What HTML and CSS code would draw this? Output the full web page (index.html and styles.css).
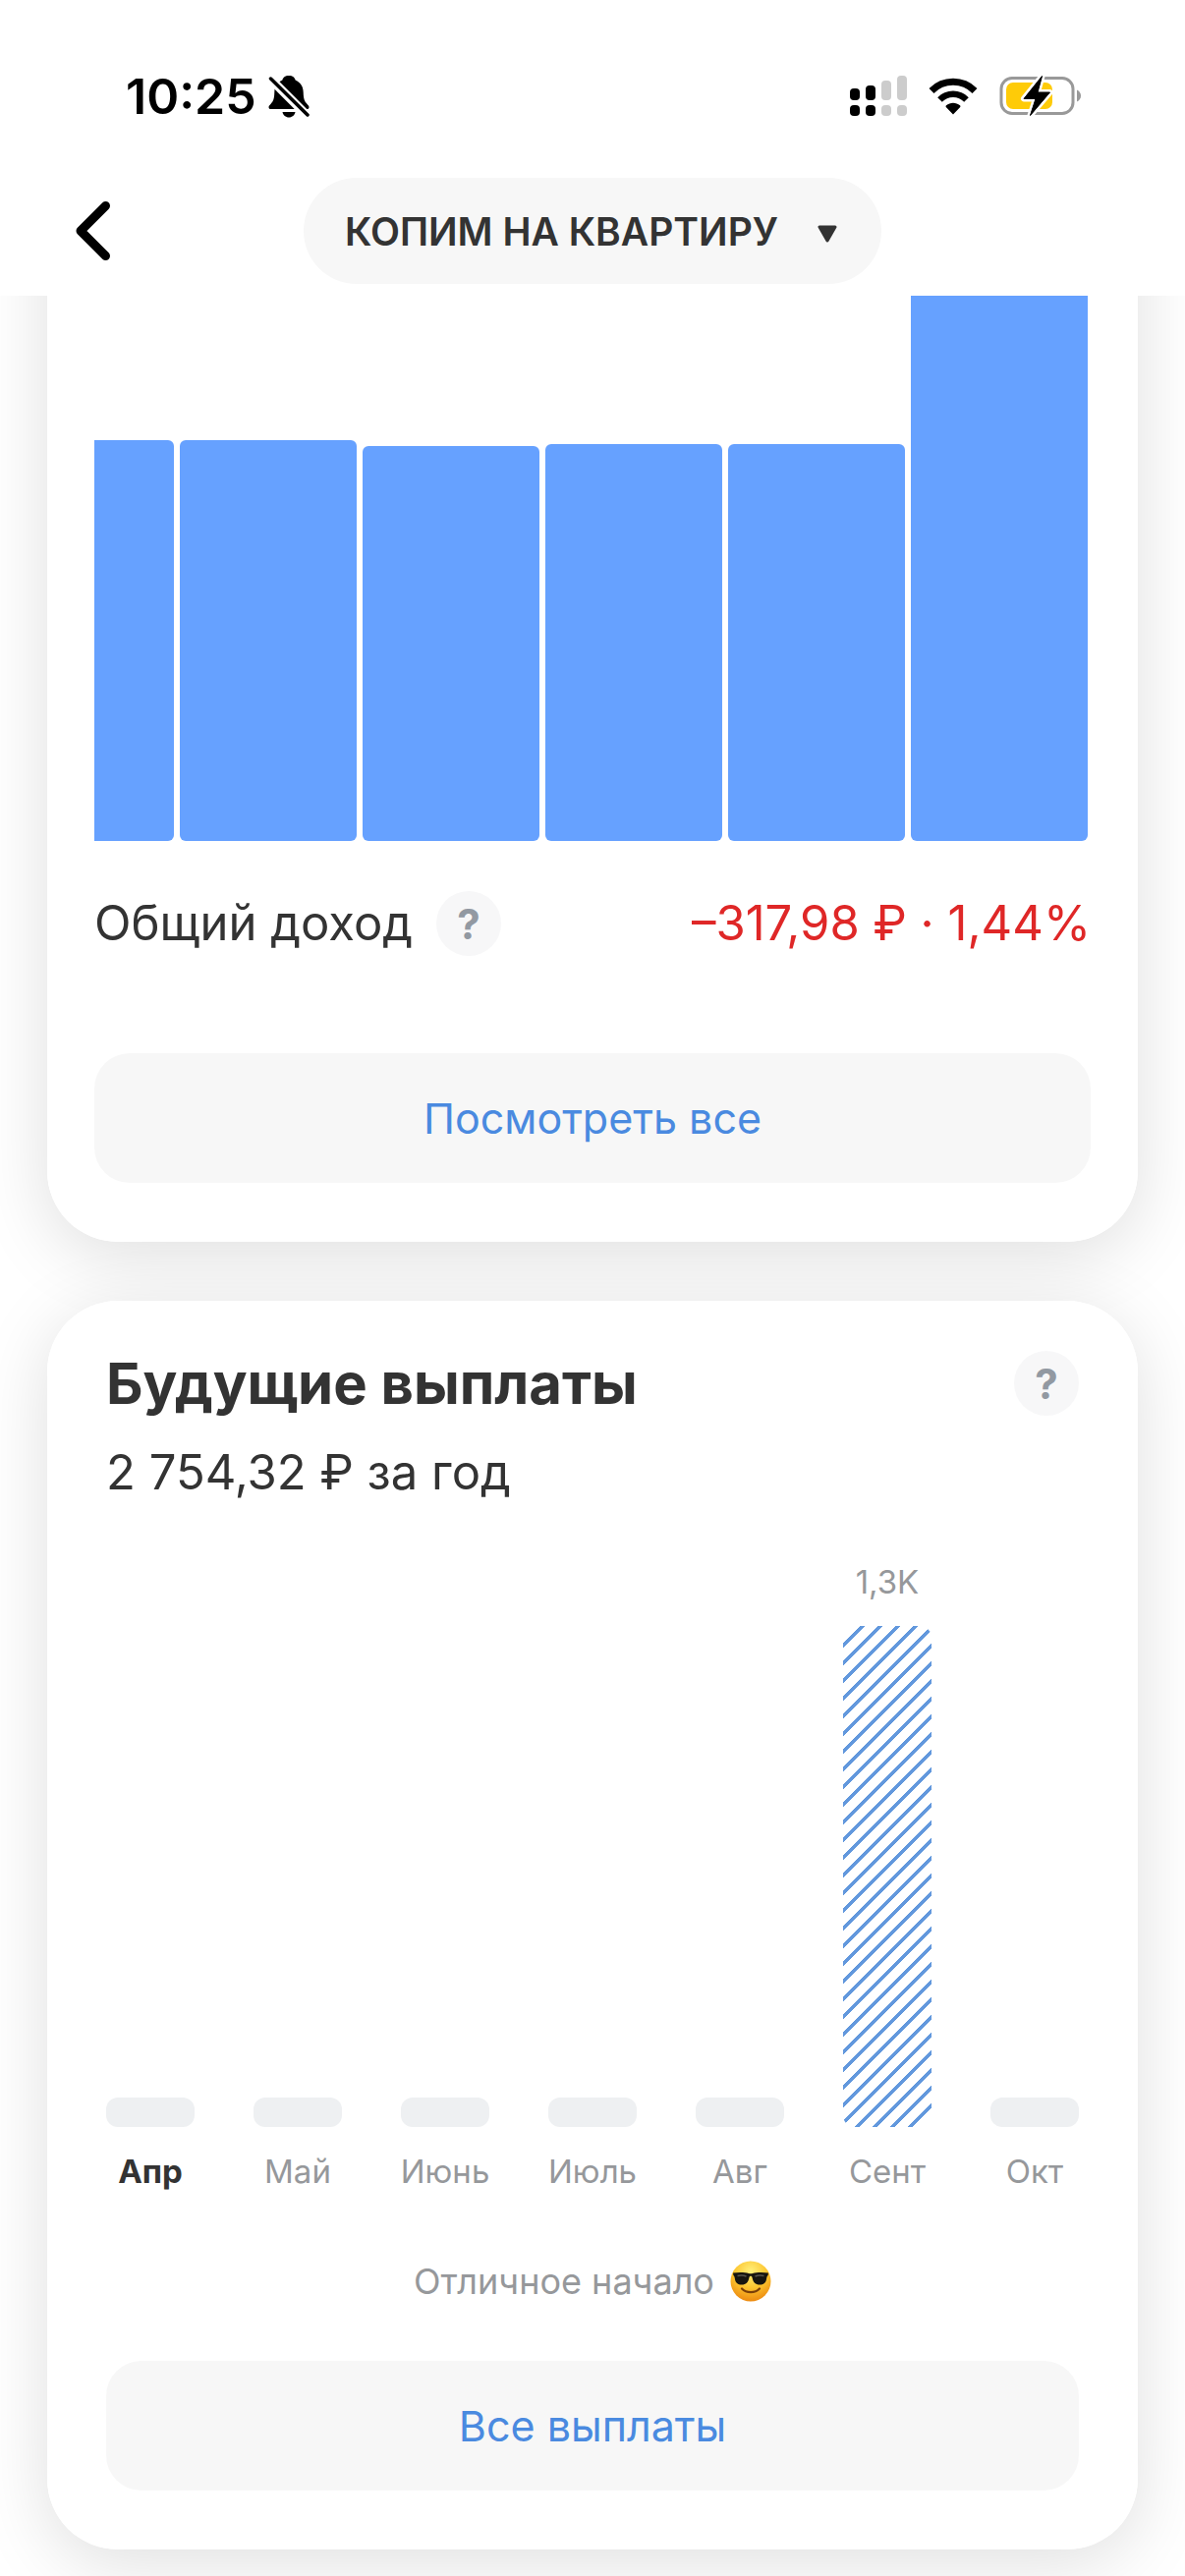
FILE: index.html
```html
<!DOCTYPE html>
<html lang="ru">
<head>
  <meta charset="UTF-8" />
  <title>Копим на квартиру</title>
  <meta name="viewport" content="width=device-width, initial-scale=1.0">
  <link rel="stylesheet" href="styles.css">
</head>
<body>
  <header>
    <div class="status-bar">
      <div class="status-left">
        <span class="time">10:25</span>
        <svg width="42" height="44" viewBox="0 0 42 44">
          <path d="M21 1c-4 0-6 2-6.600 4.500C9 8 6.500 12 6.300 18c-.2 7-1.300 9-3.500 11.500C1.200 31.300.5 32 .5 33.200.5 34.500 1.500 35 3 35h36c1.500 0 2.500-.5 2.500-1.800 0-1.200-.7-1.900-2.300-3.700-2.200-2.500-3.300-4.500-3.500-11.500-.2-6-2.700-10-8.100-12.500C27 3 25 1 21 1z"/>
          <path d="M14.500 38h13c-.6 3.200-3.200 5.500-6.500 5.500s-5.900-2.300-6.500-5.500z"/>
          <path d="M0 2l42 42" stroke="#fff" stroke-width="9"/>
          <path d="M2.500 4l37.500 37" stroke="#000" stroke-width="3.500" stroke-linecap="round"/>
        </svg>
      </div>
      <div class="status-right">
        <svg width="58" height="42" viewBox="0 0 58 42">
          <g>
            <rect x="0" y="13" width="10" height="12" rx="4"/>
            <rect x="16" y="10" width="10" height="15" rx="4"/>
            <rect x="0" y="30" width="10" height="11" rx="4"/>
            <rect x="16" y="30" width="10" height="11" rx="4"/>
          </g>
          <g fill="#ccc">
            <rect x="32" y="5" width="10" height="20" rx="4"/>
            <rect x="48" y="0" width="10" height="25" rx="4"/>
            <rect x="32" y="30" width="10" height="11" rx="4"/>
            <rect x="48" y="30" width="10" height="11" rx="4"/>
          </g>
        </svg>
        <svg width="50" height="38" viewBox="0 0 50 38">
          <path d="M3 13.500a31 31 0 0 1 44 0" fill="none" stroke="#000" stroke-width="7"/>
          <path d="M11.500 22.500a19 19 0 0 1 27 0" fill="none" stroke="#000" stroke-width="6.500"/>
          <path d="M25 37.500l-7-7.300c-.6-.6-.6-1.400 0-1.900 4-3.400 10-3.400 14 0 .6.500.6 1.300 0 1.900z"/>
        </svg>
        <svg width="83" height="42" viewBox="0 0 83 42">
          <rect x="2" y="2.500" width="73" height="36" rx="11" fill="none" stroke="#999" stroke-width="3"/>
          <path d="M79 14.500c2.500 1.200 4 3.300 4 6s-1.500 4.800-4 6z" fill="#999"/>
          <rect x="7" y="7" width="47" height="27" rx="7" fill="#fecb08"/>
          <path d="M43.500.5L25 23.500h12L31.500 40.500 51.500 17H39z" fill="#000" stroke="#fff" stroke-width="6" stroke-linejoin="round" paint-order="stroke"/>
          <path d="M43.500.5L25 23.500h12L31.500 40.500 51.500 17H39z" stroke="#000" stroke-linejoin="round"/>
        </svg>
      </div>
    </div>
    <nav>
      <button class="back" type="button" aria-label="Назад">
        <svg width="36" height="62" viewBox="0 0 36 62">
          <path d="M30.500 5.500L5 31l25.500 25.500" fill="none" stroke="#000" stroke-width="9" stroke-linecap="round" stroke-linejoin="round"/>
        </svg>
      </button>
      <div class="picker">
        <select aria-label="Портфель">
          <option>КОПИМ НА КВАРТИРУ</option>
        </select>
        <svg width="20" height="18" viewBox="0 0 20 18">
          <path d="M2 2h16l-8 14z" fill="#333" stroke="#333" stroke-width="3" stroke-linejoin="round"/>
        </svg>
      </div>
    </nav>
  </header>

  <main>
    <section class="card income">
      <div class="history">
        <div class="history-bar" style="height: 408px"></div>
        <div class="history-bar" style="height: 408px"></div>
        <div class="history-bar" style="height: 402px"></div>
        <div class="history-bar" style="height: 404px"></div>
        <div class="history-bar" style="height: 404px"></div>
        <div class="history-bar" style="height: 620px"></div>
      </div>
      <div class="row total">
        <span class="text">Общий доход</span>
        <button class="help" type="button" aria-label="Что такое общий доход">?</button>
        <span class="text loss">–317,98 ₽ · 1,44%</span>
      </div>
      <button class="action" type="button">Посмотреть все</button>
    </section>

    <section class="card payouts">
      <div class="row">
        <h2>Будущие выплаты</h2>
        <button class="help" type="button" aria-label="Что такое будущие выплаты">?</button>
      </div>
      <p class="text year">2 754,32 ₽ за год</p>
      <div class="months">
        <div class="month current"><div class="bar"></div><span>Апр</span></div>
        <div class="month"><div class="bar"></div><span>Май</span></div>
        <div class="month"><div class="bar"></div><span>Июнь</span></div>
        <div class="month"><div class="bar"></div><span>Июль</span></div>
        <div class="month"><div class="bar"></div><span>Авг</span></div>
        <div class="month"><span>1,3K</span><div class="bar planned" style="height: 510px"></div><span>Сент</span></div>
        <div class="month"><div class="bar"></div><span>Окт</span></div>
      </div>
      <p class="note">
        Отличное начало
        <svg width="42" height="42" viewBox="0 0 42 42" role="img" aria-label="😎">
          <defs>
            <radialGradient id="face" cx="50%" cy="25%" r="75%">
              <stop offset="0" stop-color="#fff07a"/>
              <stop offset=".55" stop-color="#fdc52f"/>
              <stop offset="1" stop-color="#ec8a10"/>
            </radialGradient>
          </defs>
          <circle cx="21" cy="21" r="20.500" fill="url(#face)"/>
          <path d="M3 12.500c6-.9 12-.8 16 .5 1.300.4 2.700.4 4 0 4-1.300 10-1.400 16-.5l-.4 2.500c-.9.500-1.200 1.600-1.500 3.500-.6 4.200-3 6-7 6-4.200 0-6.700-2.400-7.500-7-.2-1.200-.6-1.800-1.600-1.800s-1.400.6-1.600 1.800c-.8 4.600-3.300 7-7.500 7-4 0-6.400-1.800-7-6-.3-1.900-.6-3-1.500-3.500z" fill="#17150f"/>
          <path d="M7.500 15.500c3-.6 6.500-.5 9 .5M25.500 16c2.500-1 6-1.100 9-.5" fill="none" stroke="#57544c" stroke-width="1.500"/>
          <path d="M12 28.500c4.500 4.800 13.500 4.800 18 0" fill="none" stroke="#7a3f08" stroke-width="2.200" stroke-linecap="round"/>
        </svg>
      </p>
      <button class="action" type="button">Все выплаты</button>
    </section>
  </main>
</body>
</html>
```
FILE: styles.css
```css
* {
  box-sizing: border-box;
  margin: 0;
  padding: 0;
}

body {
  font-family: Inter, Roboto, sans-serif;
  background: #fff;
  color: #333;
}

button, select {
  font-family: inherit;
  border: none;
  cursor: pointer;
}

svg {
  display: block;
  flex: none;
}

/* header */

header {
  position: sticky;
  top: 0;
  background: #fff;
  z-index: 10;
}

.status-bar {
  display: flex;
  justify-content: space-between;
  align-items: center;
  padding: 62px 106px 35px 128px;
  color: #000;
}

.status-left {
  display: flex;
  align-items: center;
  gap: 12px;
}

.time {
  font-size: 50px;
  line-height: 72px;
  font-weight: 600;
}

.status-right {
  display: flex;
  align-items: center;
  gap: 22px;
}

nav {
  display: grid;
  grid-template-columns: 1fr auto 1fr;
  align-items: center;
  height: 132px;
  padding: 0 77px;
}

.back {
  justify-self: start;
  background: none;
}

.picker {
  position: relative;
}

.picker select {
  appearance: none;
  height: 108px;
  padding: 0 104px 0 42px;
  border-radius: 54px;
  background: #f7f7f7;
  color: #333;
  font-size: 39px;
  font-weight: 600;
}

.picker svg {
  position: absolute;
  top: 48px;
  right: 45px;
  pointer-events: none;
}

/* cards */

main {
  display: flex;
  flex-direction: column;
  gap: 60px;
  padding: 0 48px 27px;
  isolation: isolate;
}

.card {
  position: relative;
  background: #fff;
  border-radius: 72px;
}

/* shadow lives under all cards so it never falls on a neighbour */
.card::before {
  content: '';
  position: absolute;
  inset: 0;
  border-radius: 72px;
  box-shadow: 0 14px 72px rgba(0, 0, 0, 0.13);
  z-index: -1;
}

.income {
  padding: 0 48px 60px;
  border-radius: 0 0 72px 72px;
}

.income::before {
  top: -200px;
}

.payouts {
  padding: 51px 60px 60px;
}

.row {
  display: flex;
  align-items: center;
  justify-content: space-between;
  height: 66px;
}

.text {
  font-size: 49px;
  line-height: 60px;
}

.help {
  width: 66px;
  height: 66px;
  border-radius: 50%;
  background: #f7f7f8;
  color: #9299a2;
  font-size: 42px;
  font-weight: 700;
}

.action {
  display: block;
  width: 100%;
  height: 132px;
  border-radius: 36px;
  background: #f7f7f7;
  color: #4a8ae0;
  font-size: 43px;
}

/* income history */

.history {
  display: flex;
  align-items: flex-end;
  justify-content: flex-end;
  gap: 6px;
  height: 555px;
  padding-right: 3px;
  overflow: hidden;
}

.history-bar {
  flex: none;
  width: 180px;
  border-radius: 6px;
  background: #66a1ff;
}

.total {
  justify-content: flex-start;
  gap: 24px;
  margin: 51px 0 99px;
}

.loss {
  margin-left: auto;
  color: #df2727;
}

/* future payouts */

h2 {
  font-size: 58px;
  line-height: 66px;
  font-weight: 700;
}

.year {
  margin-top: 28px;
}

.months {
  display: flex;
  justify-content: space-between;
  align-items: flex-end;
  margin-top: 61px;
}

.month {
  display: flex;
  flex-direction: column;
  align-items: center;
  gap: 25px;
  width: 90px;
  color: #96989b;
  font-size: 33px;
  line-height: 40px;
  white-space: nowrap;
}

.current {
  color: #333;
  font-weight: 700;
}

.bar {
  width: 100%;
  height: 30px;
  border-radius: 12px;
  background: #eef0f2;
}

.planned {
  background: linear-gradient(135deg, #6298dd 6%, #fff 6% 44%, #6298dd 44% 56%, #fff 56% 94%, #6298dd 94%);
  background-size: 18px 18px;
  background-position: 2px 0;
}

.note {
  display: flex;
  justify-content: center;
  align-items: center;
  gap: 16px;
  margin: 71px 0 60px;
  color: #96989b;
  font-size: 36px;
  line-height: 42px;
}
```
